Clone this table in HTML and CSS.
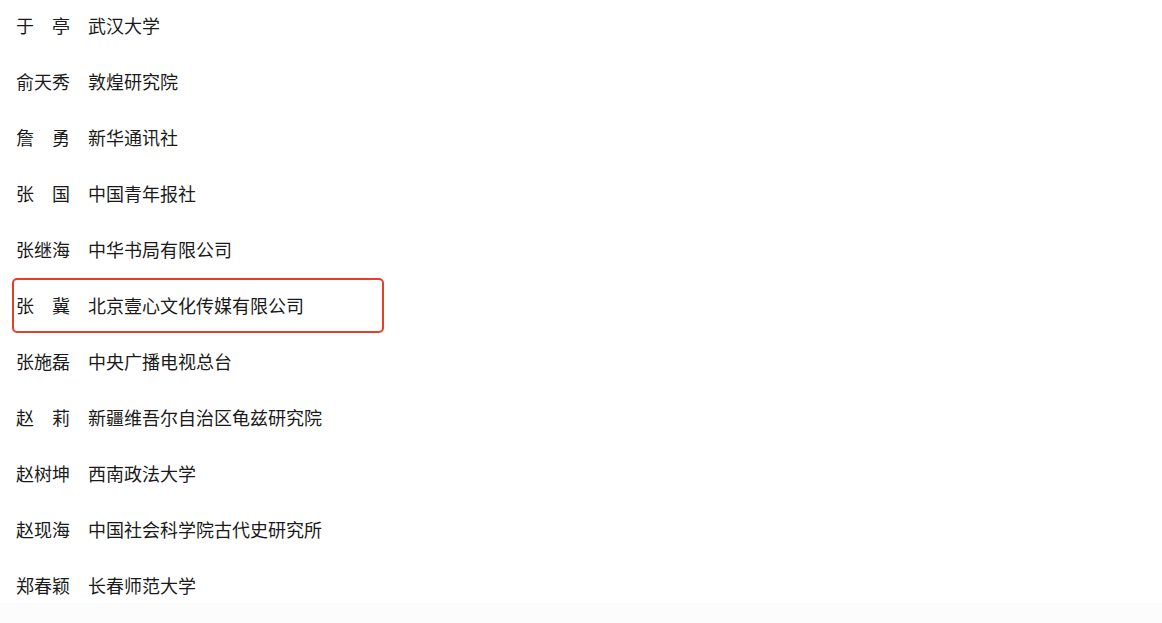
FILE: index.html
```html
<!DOCTYPE html>
<html lang="zh-CN">
<head>
  <meta charset="UTF-8">
  <title>名单</title>
  <link rel="stylesheet" href="styles.css">
</head>
<body>

<ul class="list">
  <li class="row"><span class="name">于亭</span><span class="org">武汉大学</span></li>
  <li class="row"><span class="name">俞天秀</span><span class="org">敦煌研究院</span></li>
  <li class="row"><span class="name">詹勇</span><span class="org">新华通讯社</span></li>
  <li class="row"><span class="name">张国</span><span class="org">中国青年报社</span></li>
  <li class="row"><span class="name">张继海</span><span class="org">中华书局有限公司</span></li>
  <li class="row marked"><span class="name">张冀</span><span class="org">北京壹心文化传媒有限公司</span></li>
  <li class="row"><span class="name">张施磊</span><span class="org">中央广播电视总台</span></li>
  <li class="row"><span class="name">赵莉</span><span class="org">新疆维吾尔自治区龟兹研究院</span></li>
  <li class="row"><span class="name">赵树坤</span><span class="org">西南政法大学</span></li>
  <li class="row"><span class="name">赵现海</span><span class="org">中国社会科学院古代史研究所</span></li>
  <li class="row"><span class="name">郑春颖</span><span class="org">长春师范大学</span></li>
</ul>
<div class="foot"></div>

</body>
</html>
```

FILE: styles.css
```css
body {
  margin: 0;
  background: #fff;
  color: #1a1a1a;
  font-family: "Noto Sans CJK SC", sans-serif;
  font-size: 18px;
}
.list {
  list-style: none;
  margin: 0;
  padding: 0 0 0 16px;
}
.row {
  display: flex;
  gap: 18px;
  line-height: 24px;
  padding: 13px 0 19px;
  position: relative;
}
.name {
  width: 54px;
  text-align: justify;
  text-align-last: justify;
}
.marked::after {
  content: "";
  position: absolute;
  left: -4px;
  top: -2px;
  width: 368px;
  height: 51px;
  border: 2px solid #e53e2b;
  border-radius: 5px;
}
.foot {
  height: 40px;
  margin-top: -13px;
  background: #fcfcfc;
}
```
